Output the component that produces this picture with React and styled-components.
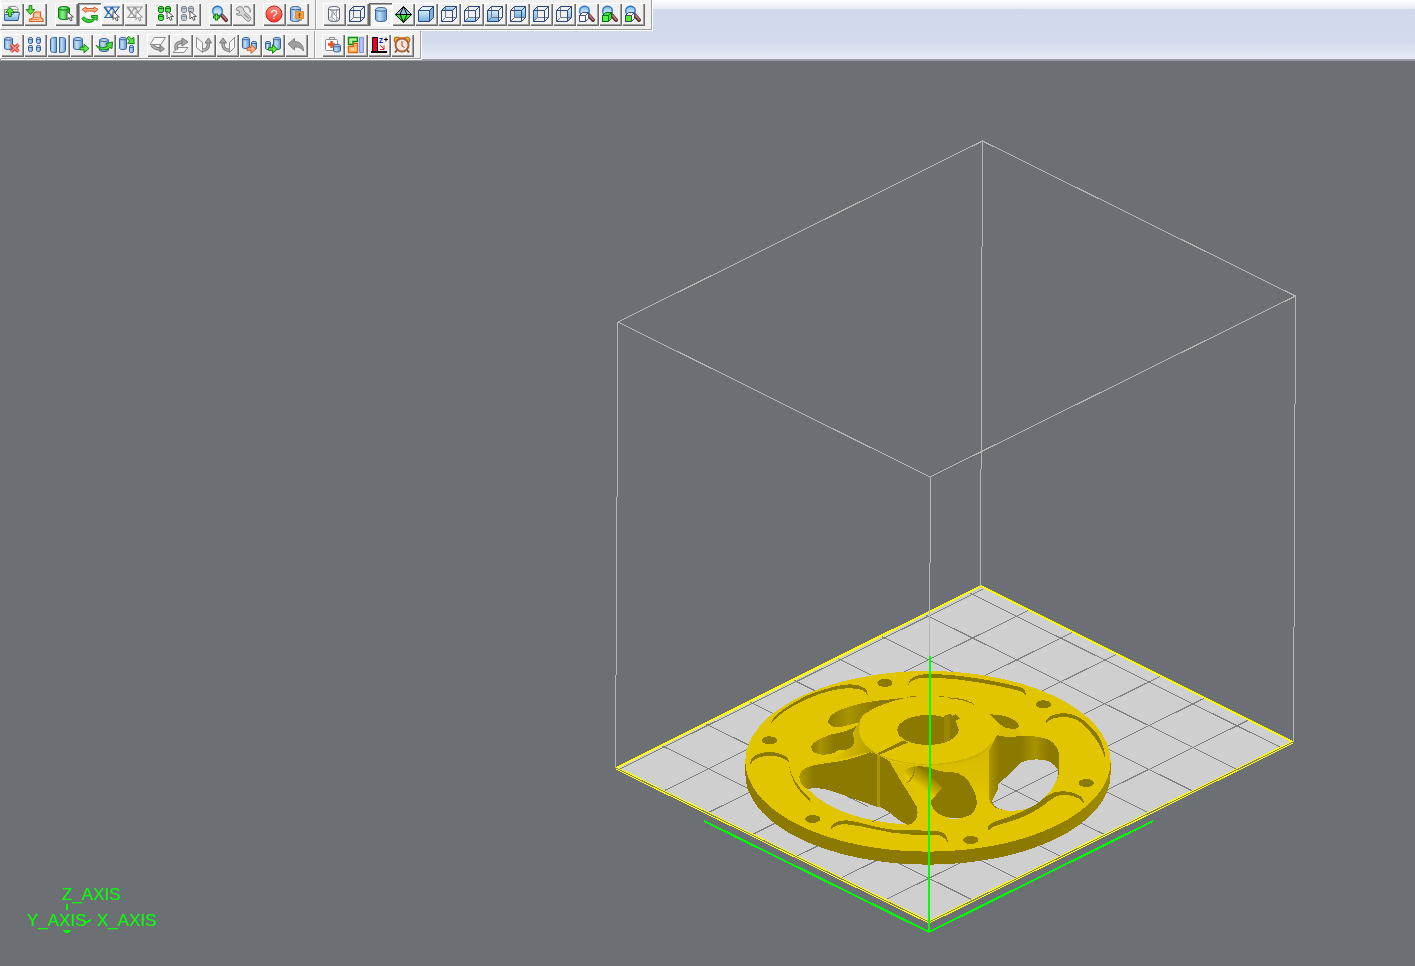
import styled, { createGlobalStyle, css } from "styled-components"

const BLUE = "#3a6299"
const GREEN = "#22b422"
const RED = "#c8321e"
const ORANGE = "#f0823c"
const GRAY = "#8c8c8c"

/* ---------- icon parts, drawn on a 23 x 23 button face ---------- */

function Cyl({ x, y, w, h, fill = "url(#blue)", stroke = BLUE }) {
  const r = w / 2
  const e = Math.max(1, w / 6)
  return (
    <g fill={fill} stroke={stroke}>
      <path d={`M${x} ${y + e}v${h - 2 * e}a${r} ${e} 0 0 0 ${w} 0v${-(h - 2 * e)}`} />
      <ellipse cx={x + r} cy={y + e} rx={r} ry={e} fill={stroke === BLUE ? "#b9d6f0" : fill} />
    </g>
  )
}

function Cursor({ x, y, stroke = "#444" }) {
  return (
    <path
      d={`M${x} ${y}v8l2 -2l1.5 3.4l1.6 -.8l-1.5 -3.1h2.8z`}
      fill="#fff"
      stroke={stroke}
      strokeWidth=".9"
    />
  )
}

function Arrow({ x, y, turn = 0, fill = "#5ae63c", stroke = "#0a780a" }) {
  return (
    <path
      d="M-4.5 -1.3h4v-3l5 4.3l-5 4.3v-3h-4z"
      transform={`translate(${x} ${y}) rotate(${turn})`}
      fill={fill}
      stroke={stroke}
      strokeWidth=".9"
    />
  )
}

const FACES = {
  top: "M3.5 7.5L7.5 3.5H18.5L14.5 7.5z",
  bottom: "M3.5 18.5L7.5 14.5H18.5L14.5 18.5z",
  front: "M3.5 7.5H14.5V18.5H3.5z",
  back: "M7.5 3.5H18.5V14.5H7.5z",
  left: "M3.5 7.5L7.5 3.5V14.5L3.5 18.5z",
  right: "M14.5 7.5L18.5 3.5V14.5L14.5 18.5z",
}

function Cube({ face }) {
  return (
    <g fill="none" stroke="#2c4878" strokeWidth="1">
      {face !== "solid" && face && <path d={FACES[face]} fill="url(#blueDown)" stroke="none" />}
      {face === "solid" ? (
        <>
          <path d={FACES.top} fill="#e2f1fb" />
          <path d={FACES.right} fill="#7fb0da" />
          <path d={FACES.front} fill="url(#blueDown)" />
        </>
      ) : (
        <>
          <path d="M7.5 3.5V14.5H18.5M7.5 14.5L3.5 18.5" stroke="#6d7890" />
          <path d="M3.5 7.5H14.5V18.5H3.5zM3.5 7.5L7.5 3.5H18.5V14.5L14.5 18.5M14.5 7.5L18.5 3.5" />
        </>
      )}
    </g>
  )
}

function Lens({ x = 8.5, y = 8, r = 4.8 }) {
  return (
    <g>
      <path d={`M${x + 4} ${y + 4}L17 17`} stroke="#5a2828" strokeWidth="4" strokeLinecap="round" />
      <path d={`M${x + 5} ${y + 4.5}L17 16.5`} stroke="#b87878" strokeWidth="1.8" strokeLinecap="round" />
      <circle cx={x} cy={y} r={r} fill="url(#glass)" stroke="#2f74b8" strokeWidth="1.4" />
    </g>
  )
}

function SmallCube({ top, front }) {
  return (
    <g fill={top} stroke={top === "#fff" ? "#2b4070" : "#0a5f0a"} strokeWidth=".9">
      <path d="M3.5 12.5L6.5 9.5H12.5V15.5L9.5 18.5H3.5z" />
      <path d="M3.5 12.5H9.5V18.5H3.5z" fill={front} />
      <path d="M9.5 12.5L12.5 9.5" />
    </g>
  )
}

function Net({ color, pen }) {
  return (
    <>
      <path
        d="M3 4H19M3 14.500H13M4 4L11 14L18 4M4 14.500L11 4L14 9M3 4L7 9.5"
        fill="none"
        stroke={color}
        strokeWidth="1.2"
      />
      <path d="M8 4h6l-3 4zM8 14l2.500 -3.500l2 3.500z" fill={color} fillOpacity=".4" />
      <Cursor x={12} y={8.5} stroke={pen} />
    </>
  )
}

function Flip({ sheet, arrow, head }) {
  return (
    <g strokeLinejoin="round">
      <path d={sheet} fill="#f8f8f8" stroke={GRAY} />
      <path d={arrow} fill="none" stroke="#777" strokeWidth="3.4" />
      <path d={arrow} fill="none" stroke="#b4b4b4" strokeWidth="1.6" />
      <path d={head} fill="#aaa" stroke="#777" />
    </g>
  )
}

const icons = {
  open: (
    <>
      <path d="M3.500 16V6.500h3l1.500 -3h7l2 2v11z" fill="#f2f2f2" stroke={GRAY} />
      <path d="M11 6.500h5M11 8.500h6" stroke="#999" />
      <path d="M3.500 17.500V11.500h8l1.500 -2H18.500l-1.500 8z" fill="url(#blueDown)" stroke={BLUE} />
      <Arrow x={9} y={9} turn={-90} />
    </>
  ),
  load: (
    <>
      <path d="M5.500 18.500v-2l4 -2v-4l2 -1.500h5v5l2.500 2.500v2z" fill="#fbc9a4" stroke="#d2641e" strokeWidth="1.200" />
      <path d="M10 14.500h6M6 16.500h9" stroke="#e68246" />
      <Arrow x={6.5} y={7} turn={90} />
    </>
  ),
  pick: (
    <>
      <Cyl x={3.5} y={3.5} w={11} h={13} fill="url(#green)" stroke="#0a780a" />
      <Cursor x={12} y={8.5} />
    </>
  ),
  swap: (
    <>
      <path d="M4 6.500L8 4v1.500h8V4l4 2.500l-4 3V8H8v1.500z" fill="#fbb28c" stroke="#d2501e" strokeWidth=".9" />
      <path d="M19.500 12.500H13.500v2h2.500c-1 2.500 -6 3 -8.500 .5c-1.500 -1.500 -2.500 -1 -3.500 .5c2 5 10 5.500 13.500 .5l1.500 1.500z" fill="#3cd23c" stroke="#0a780a" strokeWidth=".9" />
    </>
  ),
  net: <Net color="#2f66ac" pen="#444" />,
  netOff: <Net color="#999" pen="#888" />,
  parts: (
    <>
      {[[3.5, 3.5], [10.5, 3.5], [3.5, 11.5]].map(([x, y]) => (
        <Cyl key={x + y} x={x} y={y} w={5} h={6} fill="#5ae650" stroke="#0a6e0a" />
      ))}
      <Cursor x={12} y={8} />
    </>
  ),
  partsOff: (
    <>
      {[[3.5, 3.5], [10.5, 3.5], [3.5, 11.5]].map(([x, y]) => (
        <Cyl key={x + y} x={x} y={y} w={5} h={6} fill="#c4ccd4" stroke="#7c8692" />
      ))}
      <Cursor x={12} y={8} />
    </>
  ),
  zoomIn: (
    <>
      <Lens />
      <path d="M4 14h7M7.500 10.500v7" stroke="#0a780a" strokeWidth="3.200" />
      <path d="M5 14h5M7.500 11.500v5" stroke="#78f05a" strokeWidth="1.200" />
    </>
  ),
  wrench: (
    <>
      <path d="M4 7a4 4 0 0 1 7 -2l1 3l6 5.500a2.500 2.500 0 0 1 -3.500 4L9 12a4 4 0 0 1 -5 -1l3.500 -1v-2z" fill="#d6d6d6" stroke={GRAY} />
      <path d="M12 4c4 -1.500 7 1.500 6 5.500M12 11l5 4.500" fill="none" stroke="#999" strokeWidth="1.500" />
    </>
  ),
  help: (
    <>
      <circle cx="11" cy="11" r="8" fill="url(#red)" stroke="#c81e14" />
      <text x="11" y="15.500" textAnchor="middle" fill="#fff" fontSize="13" fontFamily="Liberation Sans, sans-serif">?</text>
    </>
  ),
  note: (
    <>
      <Cyl x={4.5} y={3.5} w={10} h={15} />
      <path d="M9.500 8.500h8v7h-2v2l-3 -2h-3z" fill="#f5a03c" stroke="#dc8c32" />
      <path d="M13.500 10v3.500M13.500 14v1" stroke="#8c3c00" strokeWidth="1.500" />
    </>
  ),
  mesh: (
    <>
      <Cyl x={5.5} y={3.5} w={11} h={15} fill="#fff" stroke="#5c6478" />
      <path d="M6 6l5 4.500l-5 5l4 3M11.500 7.500L8 13l5 5M16 6l-5 5l5 5l-4 2.500M9 7v11M13.500 7v11" fill="none" stroke="#8c96a4" strokeWidth=".8" />
    </>
  ),
  cylinder: <Cyl x={6.5} y={4.5} w={11} h={14} />,
  octa: (
    <>
      <path d="M3 12L11.500 3.500L20 12z" fill="#9cc4dc" />
      <path d="M3 12h17l-8.500 8z" fill="#32f032" />
      <path d="M3.500 11.500L11.500 3.500L19.500 11.500L11.500 19.500zM11.500 3.500L8 11.500l3.500 8l3.500 -8zM3.500 11.500h16" fill="none" stroke="#000" />
    </>
  ),
  cubeWire: <Cube />,
  cubeSolid: <Cube face="solid" />,
  cubeTop: <Cube face="top" />,
  cubeBottom: <Cube face="bottom" />,
  cubeFront: <Cube face="front" />,
  cubeBack: <Cube face="back" />,
  cubeLeft: <Cube face="left" />,
  cubeRight: <Cube face="right" />,
  lensWire: <><Lens /><SmallCube top="#fff" front="#fff" /></>,
  lensGreen: <><Lens /><SmallCube top="#3ce63c" front="#50f050" /></>,
  lensFront: <><Lens /><SmallCube top="#fff" front="#50f01e" /></>,
  remove: (
    <>
      <Cyl x={3.5} y={3.5} w={8} h={12} />
      <path d="M10 10.500l7.500 7M17.500 10.500l-7.500 7" stroke="#d2321e" strokeWidth="3.600" />
      <path d="M10 10.500l7.500 7M17.500 10.500l-7.500 7" stroke="#f79a8c" strokeWidth="1.600" />
    </>
  ),
  four: (
    <>
      {[[4.5, 3.5], [12.5, 3.5], [4.5, 11.5], [12.5, 11.5]].map(([x, y]) => (
        <Cyl key={`${x}-${y}`} x={x} y={y} w={4} h={6} />
      ))}
    </>
  ),
  halves: (
    <>
      <path d="M9.500 3.500C5 3.500 3.500 4 3.500 5.500V16.500c0 1.500 2 2 6 2z" fill="url(#blue)" stroke={BLUE} />
      <path d="M12.500 3.500c4.500 0 6 .5 6 2V16.500c0 1.500 -2 2 -6 2z" fill="url(#blue)" stroke={BLUE} />
    </>
  ),
  move: (
    <>
      <Cyl x={3.5} y={3.5} w={9} h={12} />
      <Arrow x={14.5} y={14.5} />
    </>
  ),
  rotate: (
    <>
      <Cyl x={6.5} y={4.5} w={9} h={13} />
      <path d="M3 11c2 3 9 3 11.500 1l-1.500 -2.500l6.500 -1.500l-.5 6.500l-2 -1c-4 4 -11.500 3 -14 -2.500z" fill="#50dc3c" stroke="#0a780a" strokeWidth=".9" />
    </>
  ),
  scale: (
    <>
      <Cyl x={3.5} y={3.5} w={7} h={12} />
      <Arrow x={15} y={6.5} turn={45} />
      <Cyl x={13.5} y={11.500} w={4} h={7} />
    </>
  ),
  flipDown: <Flip sheet="M3 10.500L7.500 3.500H18.500L14 10.500z" arrow="M5 11c2 3 5 4 9 4" head="M13 11l4.500 4l-4.500 3z" />,
  flipUp: <Flip sheet="M3 18.500L7.500 13.500H18L14 18.500z" arrow="M7 16c-3 -5 1 -8 6 -8" head="M12 4l6 4l-6 4z" />,
  flipRight: <Flip sheet="M3.500 3.500L9.500 8.500V18.500L3.500 13.500z" arrow="M9 16c5 1 6.500 -3 6.500 -7" head="M12 9l3.500 -5l3 5z" />,
  flipLeft: <Flip sheet="M18.500 3.500L13.500 8.500V18.500L18.500 13.500z" arrow="M13.500 16c-5 1 -6.500 -3 -6.500 -7" head="M3.500 9l3.500 -5l3.500 5z" />,
  toFile: (
    <>
      <Cyl x={3.5} y={3.5} w={7} h={11} />
      <Cyl x={12.5} y={7.500} w={5} h={8} />
      <Arrow x={12.5} y={15} fill="#ffb48c" stroke="#c8500a" />
    </>
  ),
  toPart: (
    <>
      <Cyl x={3.5} y={7.500} w={5} h={8} />
      <Cyl x={11.5} y={3.5} w={7} h={12} />
      <Arrow x={11} y={15} />
    </>
  ),
  undo: <path d="M3 10L9.500 4.500V7.500c6 0 9 4 9 9.500c-3 -3.500 -5 -4 -9 -4v3z" fill="#a0a0a0" stroke="#828282" />,
  repair: (
    <>
      <rect x="3.500" y="5.500" width="12" height="11" rx="1" fill="#fafafa" stroke={GRAY} />
      <path d="M7.500 5V3.500h5V5" fill="none" stroke={GRAY} />
      <path d="M6 10.500h7M9.500 7v7" stroke="#e6501e" strokeWidth="2.400" />
      <Cyl x={11.5} y={10.500} w={7} h={7.500} />
    </>
  ),
  nest: (
    <>
      <path d="M3.500 3.500h9v4h-4.500v3h-4.500z" fill="#b4f0a0" stroke="#0a8c0a" strokeWidth="1.400" />
      <path d="M3.500 12.500h5v-3h4v9h-9z" fill="#fcc878" stroke="#dc6414" strokeWidth="1.400" />
      <path d="M14.500 3.500h4v15h-4z" fill="#b4c0fa" stroke="#8290e0" />
    </>
  ),
  height: (
    <>
      <path d="M4.500 3.500h5v14h-5z" fill="#f00028" stroke="#000" />
      <path d="M3 18h16" stroke="#000" strokeWidth="2" />
      <path d="M12 11l4 4m0 -3.500v4h-4" fill="none" stroke="#e61e1e" />
      <path d="M11.500 4.500h3L11.500 8.500h3.500" fill="none" stroke="#1414c8" />
      <path d="M16 5.500h4M18 3.500v4" stroke="#000" />
    </>
  ),
  clock: (
    <>
      <path d="M6 16l-2 2.500M16 16l2 2.500" stroke="#8c5014" strokeWidth="2" />
      <circle cx="6" cy="6" r="3" fill="#f5aa3c" stroke="#b46414" />
      <circle cx="16" cy="6" r="3" fill="#f5aa3c" stroke="#b46414" />
      <circle cx="11" cy="11" r="6.500" fill="#fbe6dc" stroke="#a06440" strokeWidth="2" />
      <path d="M11 7v5l2.500 1.500" fill="none" stroke={RED} />
      <path d="M8 3.500h6" stroke={ORANGE} />
    </>
  ),
}

const fileTools = [
  ["open", "load"],
  ["pick", "swap", "net", "netOff"],
  ["parts", "partsOff"],
  ["zoomIn", "wrench"],
  ["help", "note"],
]
const viewTools = [
  ["mesh", "cubeWire", "cylinder", "octa", "cubeSolid", "cubeTop", "cubeBottom", "cubeFront",
    "cubeBack", "cubeLeft", "cubeRight", "lensWire", "lensGreen", "lensFront"],
]
const partTools = [
  ["remove", "four", "halves", "move", "rotate", "scale"],
  ["flipDown", "flipUp", "flipRight", "flipLeft", "toFile", "toPart", "undo"],
]
const extraTools = [["repair", "nest", "height", "clock"]]
const pressed = ["swap", "cylinder"]

function ToolStrip({ groups, label, first }) {
  return (
    <Strip role="toolbar" aria-label={label} $first={first}>
      {groups.map(group => (
        <Group key={group[0]}>
          {group.map(name => (
            <Tool key={name} type="button" aria-label={name} $on={pressed.includes(name)}>
              <Glyph viewBox="0 0 23 23" fill="none">{icons[name]}</Glyph>
            </Tool>
          ))}
        </Group>
      ))}
    </Strip>
  )
}

/* ---------- scene ---------- */

function Platform() {
  return (
    <g>
      <path d="M981 586L1293 742L929 922L616 768z" fill="#cfcfcf" />
      <g stroke="#808080">
        {[1, 2, 3, 4, 5, 6, 7].map(k => (
          <path key={k} d={`M${929 - 44.3 * k} ${922 - 21.8 * k}l364.500 -180.500`} />
        ))}
        {[1, 2, 3, 4, 5, 6, 7, 8].map(k => (
          <path key={k} d={`M${929 + 43.8 * k} ${922 - 21.9 * k}l-312 -155`} />
        ))}
      </g>
      <path d="M616 768L981 586L1293 742" fill="none" stroke="#ffff00" strokeWidth="2" />
      <path d="M616 768L929 922L1293 742" fill="none" stroke="#ffff00" strokeWidth="3" />
      <path d="M616 768L929 922L1293 742" fill="none" stroke="#808080" />
    </g>
  )
}

const holes = [[103, 256], [450, 84], [233, 492], [925, 148], [1054, 384], [707, 555]]

const grooves = [
  "M108 206C108 184 160 150 220 120C270 100 320 88 345 88C375 88 400 98 399 122C392 108 378 101 350 100C310 98 270 110 220 130C170 153 125 180 108 206z",
  "M520 90C518 70 545 57 580 57C680 58 780 78 850 95C868 100 874 108 872 122C868 112 855 107 840 104C780 90 690 72 600 68C550 66 528 72 520 90z",
  "M931 208C930 186 960 174 990 174C1030 176 1060 205 1085 235C1100 256 1111 285 1110 310C1104 285 1090 258 1065 230C1040 200 1020 186 990 186C960 186 942 192 931 208z",
  "M1046 443C1048 420 1010 409 980 409C945 409 930 430 900 448C860 474 820 487 780 500C762 507 756 516 760 527C770 512 800 508 830 498C870 486 915 462 940 440C960 424 970 420 985 420C1010 420 1032 426 1046 443z",
  "M286 527C284 508 305 495 335 496C380 500 420 522 500 526L600 527C625 528 642 544 638 562C630 546 615 539 598 539H530C450 536 390 512 335 508C310 507 295 512 286 527z",
  "M46 327C44 303 75 291 105 291C135 291 166 305 161 322C150 310 135 303 105 303C75 303 56 311 46 327z",
  "M162 330C166 360 185 395 225 430L227 440C190 412 164 370 162 330z",
]

/* the wheel is plotted on a grid three times as fine as the scene */
function Wheel() {
  return (
    <g transform="translate(735 655) scale(.3333)">
      <path d="M31 319V358A548 271 0 0 0 1127 358V319z" fill="url(#rim)" />
      <ellipse cx="579" cy="319" rx="548" ry="271" fill="#e1c500" />
      <g fill="#8c7a00">
        {grooves.map(d => <path key={d} d={d} />)}
        {holes.map(([cx, cy]) => <ellipse key={cx} cx={cx} cy={cy} rx="23" ry="12" />)}
        <path d="M525 124h18M612 124h15" stroke="#8c7a00" strokeWidth="3" />
        <path d="M638 127C670 127 710 136 722 152C705 140 670 131 638 130z" />
      </g>

      <path d="M280 195C285 170 350 148 420 138L520 127C470 136 420 155 392 175C378 186 375 195 373 203C345 208 320 218 305 217C288 216 277 208 280 195z" fill="url(#pocket)" />
      <path d="M357 220L374 205L376 245C390 275 410 290 430 297L405 291C375 298 350 308 290 318C300 300 330 290 352 275z" fill="url(#neck)" />
      <path d="M229 275C232 258 262 248 290 238C320 232 340 228 366 212C352 232 352 240 357 250C360 265 352 275 345 280C330 288 320 284 312 284C300 296 280 299 262 299C238 297 229 290 229 275z" fill="url(#pocket2)" />
      <path d="M765 178C820 178 854 198 852 216C840 227 812 222 797 210C786 196 775 192 765 178z" fill="#8c7a00" />

      <path d="M193 365C193 340 230 330 270 325C320 320 360 310 405 292L430 298L465 320L545 455C552 480 546 506 520 509C400 498 290 475 218 402C203 395 193 380 193 365z" fill="url(#window)" />
      <path d="M427 297h8v158h-8z" fill="#a89300" />
      <path d="M218 402C240 397 270 400 290 408L425 455L440 458C465 470 490 498 515 509C400 500 290 475 218 402z" fill="#cfcfcf" />
      <path d="M338 425L400 455M412 501L470 472" stroke="#808080" strokeWidth="3" fill="none" />

      <path d="M465 322C520 334 640 330 700 308C750 288 780 262 786 240L765 290L763 435L720 400L650 350L540 340L540 440L505 390z" fill="url(#hub)" />
      <path d="M763 285L787 240C805 250 845 243 880 243C930 245 965 255 973 300V350C965 400 910 455 830 468C785 468 765 450 763 435z" fill="url(#window2)" />
      <path d="M770 440L788 405V390L860 322C880 311 920 310 945 320C965 335 972 345 970 355C965 400 910 455 870 462C830 472 782 470 770 440z" fill="#cfcfcf" />
      <path d="M772 444L842 408L968 345M797 385L842 408L910 441" stroke="#808080" strokeWidth="3" fill="none" />
      <path d="M797 210C805 220 830 226 850 222L862 243C830 246 805 248 790 240z" fill="#d8bd00" />

      <path d="M505 362C505 345 530 332 560 334C590 336 610 352 640 351C680 348 700 374 712 398C726 420 725 435 725 450C720 480 695 490 660 490C620 488 588 470 588 438z" fill="#8c7a00" />
      <path d="M505 362C505 345 520 335 540 334L575 350L623 400C610 410 600 425 588 438C560 425 520 392 505 362z" fill="url(#channel)" />
      <path d="M538 335C542 355 530 374 516 384" fill="none" stroke="#9c8700" strokeWidth="4" />
      <path d="M642 488h30v4h-30z" fill="#cfcfcf" />

      <path d="M373 226C373 250 390 280 430 301C500 338 660 341 730 304C765 284 786 255 786 226z" fill="#cbb100" />
      <ellipse cx="579" cy="226" rx="207" ry="101" fill="#e1c500" />
      <ellipse cx="579" cy="225" rx="92" ry="45" fill="#8c7a00" />
      <path d="M628 182L645 177L652 182L662 178L676 190L662 198L668 210L630 200z" fill="#8c7a00" />
      <path d="M627 184h18v70l-18 8z" fill="#9a8600" />
      <path d="M504 257L521 262L434 299L427 295z" fill="#8c7a00" />
    </g>
  )
}

export default function App() {
  return (
    <Page>
      <GlobalStyle />
      <Defs />
      <Header>
        <Row>
          <ToolStrip groups={fileTools} label="File and selection" first />
          <ToolStrip groups={viewTools} label="View" />
        </Row>
        <Row>
          <ToolStrip groups={partTools} label="Part" first />
          <ToolStrip groups={extraTools} label="Extras" />
        </Row>
      </Header>
      <Viewport>
        <Scene viewBox="0 61 1415 905" preserveAspectRatio="xMidYMid slice" shapeRendering="crispEdges">
          <Platform />
          <path
            d="M982.500 141L1295.500 296L930 477L618 322zM982.500 141L980.500 586M618 322L615.500 768M1295.500 296L1293.500 742M930.500 477L929.500 656"
            fill="none"
            stroke="#b4b4b4"
          />
          <Wheel />
          <path d="M704 821L929 932L1153 821M930 656V786M929 786V932" fill="none" stroke="#00ff00" strokeWidth="2" />
          <g fill="#00ff00">
            <AxisLabel x="62" y="900">Z_AXIS</AxisLabel>
            <AxisLabel x="27" y="926">Y_AXIS</AxisLabel>
            <AxisLabel x="97" y="926">X_AXIS</AxisLabel>
            <path d="M66 904h2v6h-2zM62 930h10l-4 3h-2zM85 922l6 -3v2l-6 3z" />
          </g>
        </Scene>
      </Viewport>
    </Page>
  )
}

function Defs() {
  return (
    <Hidden aria-hidden="true">
      <defs>
        <linearGradient id="blue">
          <stop offset="0" stopColor="#6ea4da" />
          <stop offset=".35" stopColor="#c3def5" />
          <stop offset="1" stopColor="#5a94cf" />
        </linearGradient>
        <linearGradient id="blueDown" x2="0" y2="1">
          <stop offset="0" stopColor="#d6ecfa" />
          <stop offset="1" stopColor="#74aede" />
        </linearGradient>
        <linearGradient id="green">
          <stop offset="0" stopColor={GREEN} />
          <stop offset=".35" stopColor="#8cf08c" />
          <stop offset="1" stopColor="#1ea01e" />
        </linearGradient>
        <linearGradient id="glass" x2="0" y2="1">
          <stop offset="0" stopColor="#7fc0ee" />
          <stop offset="1" stopColor="#eaf8ff" />
        </linearGradient>
        <linearGradient id="red" x2="0" y2="1">
          <stop offset="0" stopColor="#ff8c7d" />
          <stop offset="1" stopColor="#f03c2d" />
        </linearGradient>
        <linearGradient id="rim">
          <stop offset="0" stopColor="#8c7a00" />
          <stop offset=".8" stopColor="#8c7a00" />
          <stop offset="1" stopColor="#a08b00" />
        </linearGradient>
        <linearGradient id="pocket">
          <stop offset="0" stopColor="#8c7a00" />
          <stop offset=".25" stopColor="#a89300" />
          <stop offset=".6" stopColor="#8c7a00" />
          <stop offset="1" stopColor="#8c7a00" />
        </linearGradient>
        <linearGradient id="pocket2">
          <stop offset="0" stopColor="#8c7a00" />
          <stop offset=".2" stopColor="#a89300" />
          <stop offset=".5" stopColor="#8c7a00" />
          <stop offset="1" stopColor="#8c7a00" />
        </linearGradient>
        <linearGradient id="neck">
          <stop offset="0" stopColor="#e1c500" />
          <stop offset=".6" stopColor="#c4ab00" />
          <stop offset="1" stopColor="#ab9600" />
        </linearGradient>
        <linearGradient id="window">
          <stop offset="0" stopColor="#b09a00" />
          <stop offset=".12" stopColor="#8c7a00" />
          <stop offset="1" stopColor="#8c7a00" />
        </linearGradient>
        <linearGradient id="window2">
          <stop offset="0" stopColor="#ab9600" />
          <stop offset=".14" stopColor="#8c7a00" />
          <stop offset=".45" stopColor="#8c7a00" />
          <stop offset=".65" stopColor="#a89300" />
          <stop offset=".85" stopColor="#8c7a00" />
          <stop offset="1" stopColor="#8c7a00" />
        </linearGradient>
        <linearGradient id="hub" x2="0" y2="1">
          <stop offset="0" stopColor="#d0b600" />
          <stop offset="1" stopColor="#e1c500" />
        </linearGradient>
        <linearGradient id="channel" gradientUnits="userSpaceOnUse" x1="595" y1="362" x2="558" y2="412">
          <stop offset="0" stopColor="#8c7a00" />
          <stop offset=".8" stopColor="#e1c500" />
        </linearGradient>
      </defs>
    </Hidden>
  )
}

const GlobalStyle = createGlobalStyle`
  body {
    margin: 0;
    background: #6c6f74;
  }
`
const Page = styled.main`
  display: flex;
  flex-direction: column;
  height: 100vh;
`
const Header = styled.header`
  background: linear-gradient(#fff 0, #e8ebf5 9px, #d2d8ec 9px, #d4daed 40px, #e6eaf6 59px);
  border-bottom: 2px solid #9a9ba2;
`
const Row = styled.div`
  display: flex;
  & + & {
    margin-top: 1px;
  }
  & + & > div {
    padding-bottom: 1px;
  }
`
const Strip = styled.div`
  display: flex;
  gap: 8px;
  padding: 3px 6px;
  padding-left: ${(props) => (props.$first ? "0" : "6px")};
  background: #f0f0f0;
  border-left: 1px solid #fff;
  border-right: 1px solid #a0a0a0;
  border-bottom: 1px solid #a0a0a0;
  box-shadow: 1px 1px 0 #fff;
`
const Group = styled.div`
  display: flex;
`
const Tool = styled.button`
  width: 23px;
  height: 23px;
  padding: 0;
  border: 0;
  background: #f0f0f0;
  box-shadow: inset 1px 1px 0 #fff, inset -1px -1px 0 #696969, inset -2px -2px 0 #a0a0a0;
  ${(props) => props.$on && css`
    background: repeating-conic-gradient(#fff 0 25%, #f0f0f0 0 50%) 0 0 / 2px 2px;
    box-shadow: inset 1px 1px 0 #696969, inset 2px 2px 0 #a0a0a0, inset -1px -1px 0 #fff;
  `}
`
const Glyph = styled.svg`
  display: block;
  width: 100%;
  height: 100%;
`
const Viewport = styled.section`
  flex: 1;
  min-height: 0;
  background: #6c6f74;
`
const Scene = styled.svg`
  display: block;
  width: 100%;
  height: 100%;
`
const AxisLabel = styled.text`
  font-family: "Liberation Sans", Arial, sans-serif;
  font-size: 17px;
`
const Hidden = styled.svg`
  position: absolute;
  width: 0;
  height: 0;
`
